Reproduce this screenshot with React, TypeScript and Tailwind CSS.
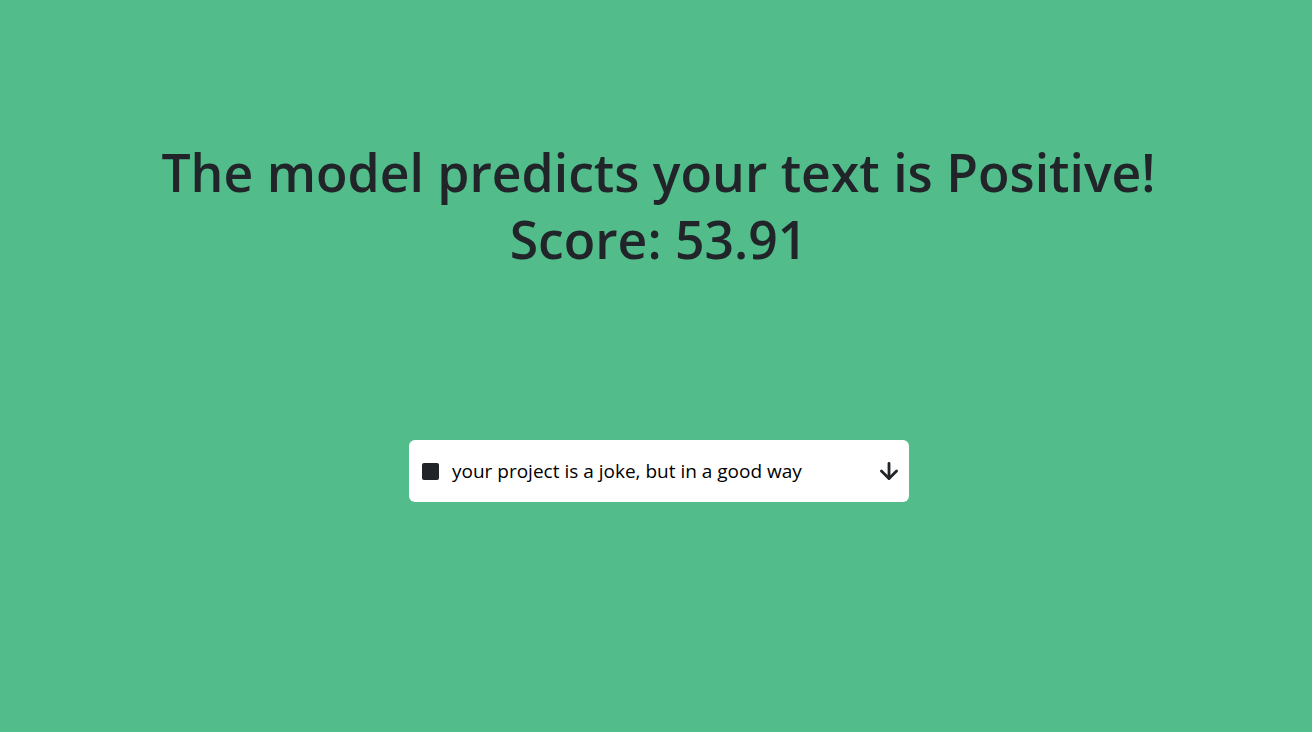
import { ArrowDown } from "lucide-react"

const result = {
  label: "Positive",
  score: "53.91",
  text: "your project is a joke, but in a good way",
}

const App = () => {
  return (
    <div className="min-h-[732px] bg-[#52bd8a] font-['Open_Sans',sans-serif] text-[#212529]">
      <div className="flex flex-col items-center pl-[5px] pt-[139px]">
        <h1 className="text-center text-[51.7px] leading-[67px] font-semibold">
          The model predicts your text is {result.label}!
          <br />
          Score: {result.score}
        </h1>

        <div className="ml-[1px] mt-[167px] flex h-[62px] w-[500px] items-center rounded-md bg-white pl-[13px] pr-[7px]">
          <span className="h-[17px] w-[17px] rounded-[2px] bg-[#212529]"></span>
          <p className="ml-[13px] flex-1 text-[19px] text-black">{result.text}</p>
          <ArrowDown size={26} strokeWidth={2.6} className="text-[#212529]" />
        </div>
      </div>
    </div>
  )
}

export default App
